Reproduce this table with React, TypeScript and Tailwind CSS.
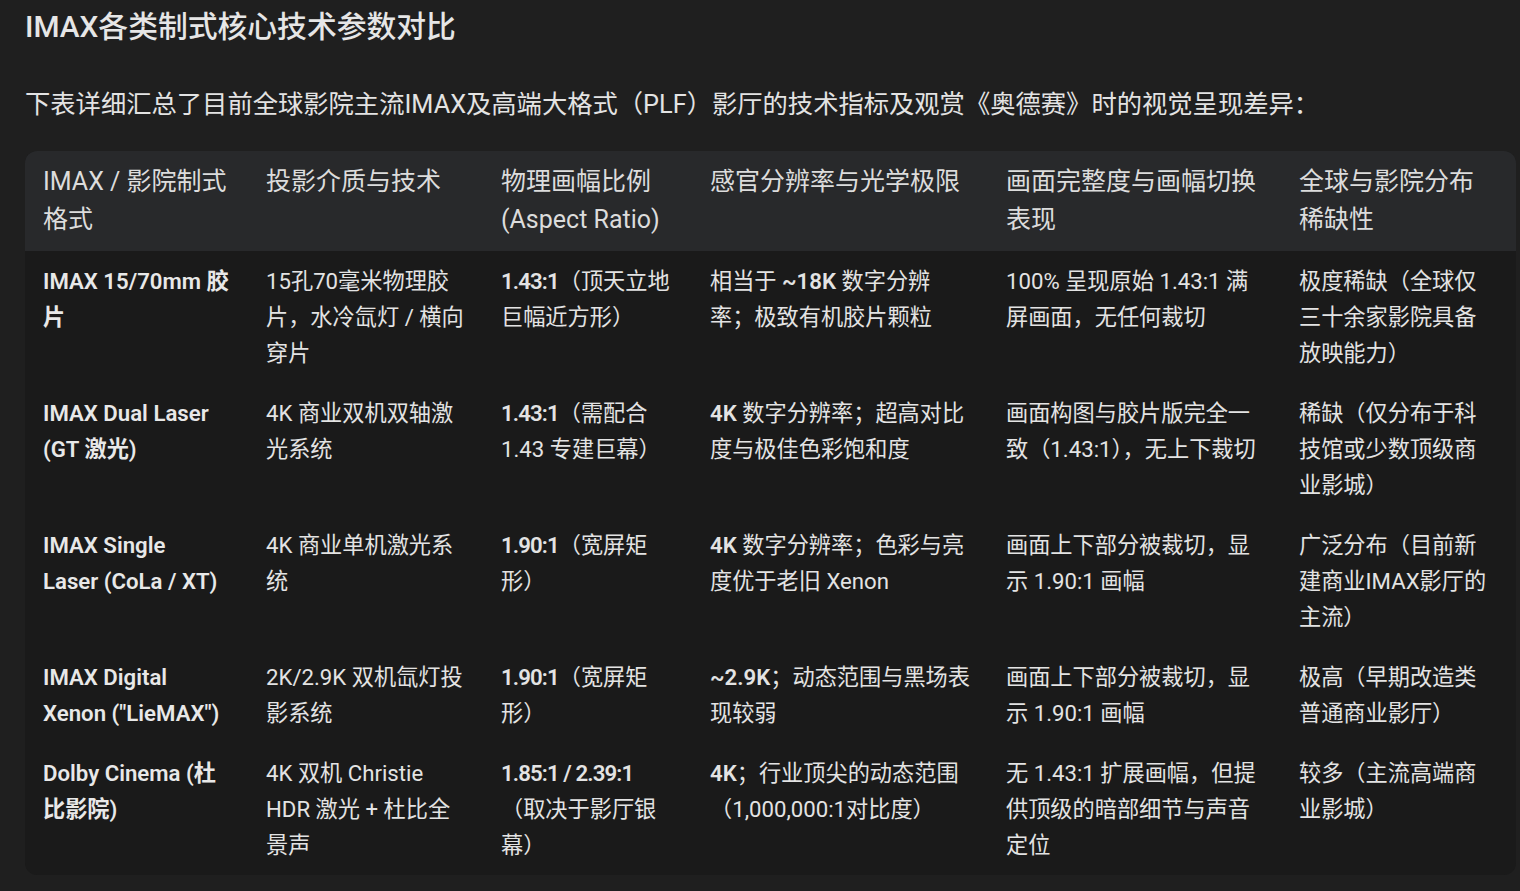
import React from 'react';

type Row = {
  format: string;
  medium: string;
  ratioBold: string;
  ratioRest: string;
  resBold: string;
  resRest: string;
  frame: string;
  scarcity: string;
};

const rows: Row[] = [
  {
    format: 'IMAX 15/70mm 胶片',
    medium: '15孔70毫米物理胶片，水冷氙灯 / 横向穿片',
    ratioBold: '1.43:1',
    ratioRest: '（顶天立地巨幅近方形）',
    resBold: '~18K',
    resRest: '相当于 ',
    frame: '100% 呈现原始 1.43:1 满屏画面，无任何裁切',
    scarcity: '极度稀缺（全球仅三十余家影院具备放映能力）',
  },
  {
    format: 'IMAX Dual Laser (GT 激光)',
    medium: '4K 商业双机双轴激光系统',
    ratioBold: '1.43:1',
    ratioRest: '（需配合 1.43 专建巨幕）',
    resBold: '4K',
    resRest: '',
    frame: '画面构图与胶片版完全一致（1.43:1），无上下裁切',
    scarcity: '稀缺（仅分布于科技馆或少数顶级商业影城）',
  },
  {
    format: 'IMAX Single Laser\u00a0(CoLa / XT)',
    medium: '4K 商业单机激光系统',
    ratioBold: '1.90:1',
    ratioRest: '（宽屏矩形）',
    resBold: '4K',
    resRest: '',
    frame: '画面上下部分被裁切，显示 1.90:1 画幅',
    scarcity: '广泛分布（目前新建商业IMAX影厅的主流）',
  },
  {
    format: 'IMAX Digital Xenon ("LieMAX")',
    medium: '2K/2.9K 双机氙灯投影系统',
    ratioBold: '1.90:1',
    ratioRest: '（宽屏矩形）',
    resBold: '~2.9K',
    resRest: '',
    frame: '画面上下部分被裁切，显示 1.90:1 画幅',
    scarcity: '极高（早期改造类普通商业影厅）',
  },
  {
    format: 'Dolby Cinema (杜比影院)',
    medium: '4K 双机 Christie HDR 激光 + 杜比全景声',
    ratioBold: '1.85:1 / 2.39:1',
    ratioRest: '（取决于影厅银幕）',
    resBold: '4K',
    resRest: '',
    frame: '无 1.43:1 扩展画幅，但提供顶级的暗部细节与声音定位',
    scarcity: '较多（主流高端商业影城）',
  },
];

// text after the bold resolution figure
const resTail = [
  ' 数字分辨率；极致有机胶片颗粒',
  ' 数字分辨率；超高对比度与极佳色彩饱和度',
  ' 数字分辨率；色彩与亮度优于老旧 Xenon',
  '；动态范围与黑场表现较弱',
  '；行业顶尖的动态范围（1,000,000:1对比度）',
];

const headers = [
  'IMAX / 影院制式格式',
  '投影介质与技术',
  '物理画幅比例 (Aspect Ratio)',
  '感官分辨率与光学极限',
  '画面完整度与画幅切换表现',
  '全球与影院分布稀缺性',
];

const widths = ['w-[223px]', 'w-[235px]', 'w-[209px]', 'w-[296px]', 'w-[293px]', 'w-[235px]'];

export default function App() {
  return (
    <div
      className="min-h-[891px] bg-[#1f1f1f] pl-[25px] pt-[8px] text-[#e3e3e3]"
      style={{ fontFamily: "Roboto, 'Noto Sans CJK SC', 'Noto Sans', sans-serif" }}
    >
      <h2 className="text-[29.8px] leading-[38px] font-medium text-[#e6e6e6]">IMAX各类制式核心技术参数对比</h2>

      <p className="mt-[41px] text-[25.3px] leading-[36px] text-[#e3e3e3]">
        下表详细汇总了目前全球影院主流IMAX及高端大格式（PLF）影厅的技术指标及观赏《奥德赛》时的视觉呈现差异：
      </p>

      <div className="mt-[28px] w-[1491px] overflow-hidden rounded-[12px] bg-[#1a1a1a]">
        <table className="w-full table-fixed border-collapse text-left">
          <colgroup>
            {widths.map((w) => (
              <col key={w} className={w} />
            ))}
          </colgroup>
          <thead className="bg-[#28292b]">
            <tr>
              {headers.map((h) => (
                <th
                  key={h}
                  className="px-[18px] pt-[12px] pb-[12px] align-top text-[25px] leading-[38px] font-normal text-[#dcdcdc]"
                >
                  {h}
                </th>
              ))}
            </tr>
          </thead>
          <tbody className="text-[22.2px] leading-[36px]">
            {rows.map((r, i) => (
              <tr key={r.format}>
                <td className="px-[18px] py-[12px] align-top font-semibold text-[#e8e8e8]">{r.format}</td>
                <td className="px-[18px] py-[12px] align-top">{r.medium}</td>
                <td className="px-[18px] py-[12px] align-top">
                  <span className="font-semibold tracking-[-0.04em]">{r.ratioBold}</span>
                  {r.ratioRest}
                </td>
                <td className="px-[18px] py-[12px] align-top">
                  {r.resRest}
                  <span className="font-semibold">{r.resBold}</span>
                  {resTail[i]}
                </td>
                <td className="px-[18px] py-[12px] align-top">{r.frame}</td>
                <td className="px-[18px] py-[12px] align-top">{r.scarcity}</td>
              </tr>
            ))}
          </tbody>
        </table>
      </div>
    </div>
  );
}
